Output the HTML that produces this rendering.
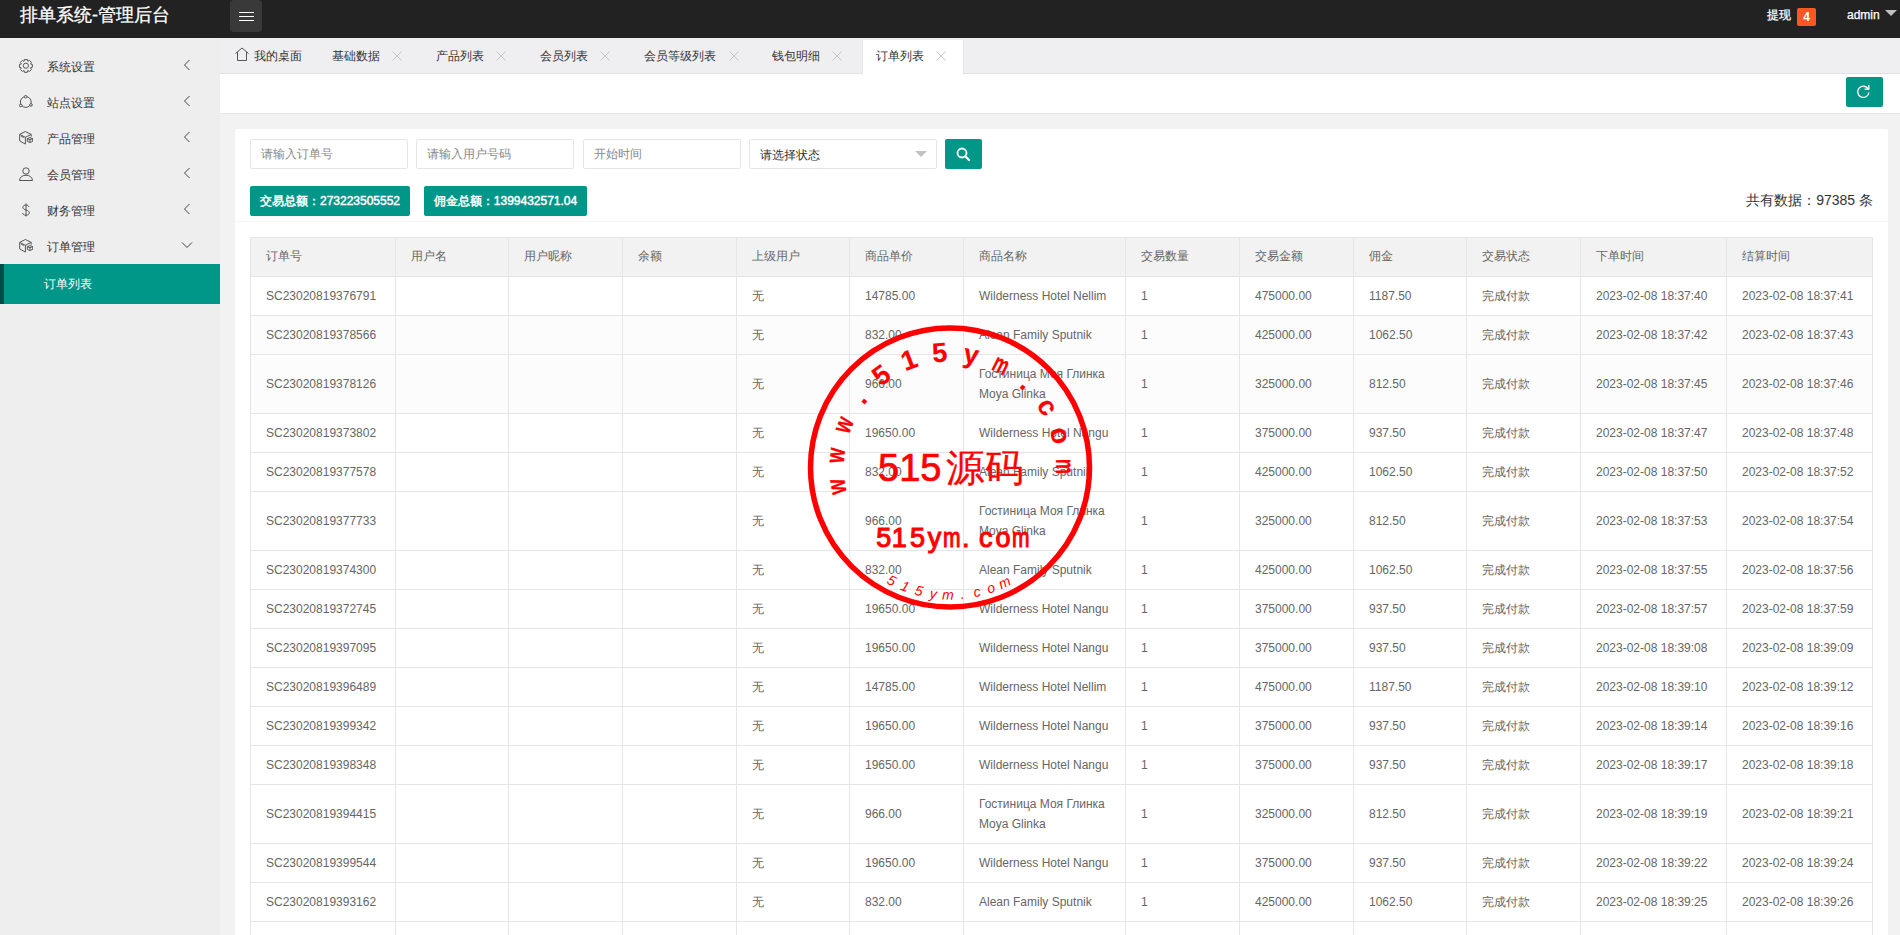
<!DOCTYPE html><html><head><meta charset="utf-8"><title>订单列表</title><style>
*{margin:0;padding:0;box-sizing:border-box}
html,body{width:1900px;height:935px;overflow:hidden;background:#f2f2f2;font-family:"Liberation Sans",sans-serif;font-size:12px;color:#333}
.a{position:absolute}
.hdr{left:0;top:0;width:1900px;height:38px;background:#222}
.side{left:0;top:38px;width:220px;height:897px;background:#eee}
.tabs{left:220px;top:38px;width:1680px;height:36px;background:#efeff1;border-bottom:1px solid #e2e2e2}
.tool{left:220px;top:74px;width:1680px;height:40px;background:#fff;border-bottom:1px solid #e6e6e6}
.card{left:235px;top:129px;width:1653px;height:820px;background:#fff;border-radius:2px}
.t{white-space:nowrap;line-height:20px}
</style></head><body>
<div class="a hdr"></div>
<div class="a t" style="left:20px;top:4.5px;font-size:18px;line-height:20px;color:#fff;-webkit-text-stroke:0.3px #fff">排单系统-管理后台</div>
<div class="a" style="left:230px;top:0;width:32px;height:32px;background:#393939;border-radius:4px"></div>
<div class="a" style="left:239px;top:11.5px;width:15px;height:1.2px;background:#fff"></div>
<div class="a" style="left:239px;top:15.5px;width:15px;height:1.2px;background:#fff"></div>
<div class="a" style="left:239px;top:19.5px;width:15px;height:1.2px;background:#fff"></div>
<div class="a t" style="left:1767px;top:5px;color:#fff;-webkit-text-stroke:0.25px #fff">提现</div>
<div class="a" style="left:1797px;top:8px;width:19px;height:18px;background:#ff5722;border-radius:2px;color:#fff;font-weight:bold;text-align:center;line-height:18px">4</div>
<div class="a t" style="left:1847px;top:5px;color:#fff;-webkit-text-stroke:0.25px #fff">admin</div>
<svg class="a" style="left:1885px;top:10px" width="12" height="7"><path d="M0 0H12L6 6Z" fill="#c2c2c2"/></svg>
<div class="a side"></div>
<div class="a" style="left:19px;top:59px;width:14px;height:14px"><svg width="14" height="14" viewBox="0 0 14 14" fill="none" stroke="#555" stroke-width="1"><path d="M5.05 2.26 L5.46 0.46 L8.34 0.46 L8.75 2.26 L8.87 2.31 L10.44 1.33 L12.47 3.36 L11.49 4.93 L11.54 5.05 L13.34 5.46 L13.34 8.34 L11.54 8.75 L11.49 8.87 L12.47 10.44 L10.44 12.47 L8.87 11.49 L8.75 11.54 L8.34 13.34 L5.46 13.34 L5.05 11.54 L4.93 11.49 L3.36 12.47 L1.33 10.44 L2.31 8.87 L2.26 8.75 L0.46 8.34 L0.46 5.46 L2.26 5.05 L2.31 4.93 L1.33 3.36 L3.36 1.33 L4.93 2.31Z" stroke-linejoin="round"/><circle cx="6.9" cy="6.7" r="2.6"/></svg></div>
<div class="a t" style="left:47px;top:57px;color:#333">系统设置</div>
<svg class="a" style="left:183px;top:59px" width="8" height="12"><path d="M6.5 1L1.5 6 6.5 11" fill="none" stroke="#444" stroke-width="1"/></svg>
<div class="a" style="left:19px;top:95px;width:14px;height:14px"><svg width="14" height="14" viewBox="0 0 14 14" fill="none" stroke="#555" stroke-width="1"><circle cx="6.8" cy="7" r="5.4"/><circle cx="6.6" cy="1.7" r="1.3" fill="#eee"/><circle cx="1.7" cy="10.5" r="1.3" fill="#eee"/><circle cx="12" cy="9.9" r="1.3" fill="#eee"/></svg></div>
<div class="a t" style="left:47px;top:93px;color:#333">站点设置</div>
<svg class="a" style="left:183px;top:95px" width="8" height="12"><path d="M6.5 1L1.5 6 6.5 11" fill="none" stroke="#444" stroke-width="1"/></svg>
<div class="a" style="left:19px;top:131px;width:14px;height:14px"><svg width="14" height="14" viewBox="0 0 14 14" fill="none" stroke="#555" stroke-width="1" stroke-linejoin="round"><path d="M0.7 3.4L6.4 0.5 12.2 3.4 6.4 6.3Z M0.7 3.4V9.9L6.4 13.1V6.3 M12.2 3.4V5.6 M2.2 5.2L4.8 6.5"/><path d="M8.3 7.6L11 6.6 13.7 7.6 11 8.7Z M8.3 7.6V10.4L11 11.5 13.7 10.4V7.6 M11 8.7V11.5"/></svg></div>
<div class="a t" style="left:47px;top:129px;color:#333">产品管理</div>
<svg class="a" style="left:183px;top:131px" width="8" height="12"><path d="M6.5 1L1.5 6 6.5 11" fill="none" stroke="#444" stroke-width="1"/></svg>
<div class="a" style="left:19px;top:167px;width:14px;height:14px"><svg width="14" height="14" viewBox="0 0 14 14" fill="none" stroke="#555" stroke-width="1"><circle cx="7" cy="4" r="3.2"/><path d="M0.5 13.5C0.8 10 3.5 8.2 7 8.2S13.2 10 13.5 13.5Z"/></svg></div>
<div class="a t" style="left:47px;top:165px;color:#333">会员管理</div>
<svg class="a" style="left:183px;top:167px" width="8" height="12"><path d="M6.5 1L1.5 6 6.5 11" fill="none" stroke="#444" stroke-width="1"/></svg>
<div class="a" style="left:19px;top:203px;width:14px;height:14px"><svg width="14" height="14" viewBox="0 0 14 14" fill="none" stroke="#555" stroke-width="1"><path d="M10 4C9.6 2.6 8.5 2 7 2 5 2 3.9 3 3.9 4.3 3.9 7.6 10.3 6.4 10.3 9.8 10.3 11.2 9 12.2 7 12.2 5.2 12.2 4 11.4 3.6 10M7 0.5v13"/></svg></div>
<div class="a t" style="left:47px;top:201px;color:#333">财务管理</div>
<svg class="a" style="left:183px;top:203px" width="8" height="12"><path d="M6.5 1L1.5 6 6.5 11" fill="none" stroke="#444" stroke-width="1"/></svg>
<div class="a" style="left:19px;top:239px;width:14px;height:14px"><svg width="14" height="14" viewBox="0 0 14 14" fill="none" stroke="#555" stroke-width="1" stroke-linejoin="round"><path d="M0.7 3.4L6.4 0.5 12.2 3.4 6.4 6.3Z M0.7 3.4V9.9L6.4 13.1V6.3 M12.2 3.4V5.6 M2.2 5.2L4.8 6.5"/><path d="M8.3 7.6L11 6.6 13.7 7.6 11 8.7Z M8.3 7.6V10.4L11 11.5 13.7 10.4V7.6 M11 8.7V11.5"/></svg></div>
<div class="a t" style="left:47px;top:237px;color:#333">订单管理</div>
<svg class="a" style="left:181px;top:241px" width="12" height="8"><path d="M1 1.5L6 6.5 11 1.5" fill="none" stroke="#444" stroke-width="1"/></svg>
<div class="a" style="left:0;top:264px;width:220px;height:40px;background:#009688;border-left:4px solid #004d47"></div>
<div class="a t" style="left:44px;top:274px;color:#fff">订单列表</div>
<div class="a tabs"></div>
<div class="a tool"></div>
<div class="a" style="left:862px;top:39px;width:102px;height:36px;background:#fff;border-left:1px solid #e6e6e6;border-right:1px solid #e6e6e6;border-top:1px solid #eee"></div>
<svg class="a" style="left:234px;top:47px" width="16" height="15" viewBox="0 0 16 15"><path d="M1.5 6.5L8 1 14.5 6.5M3.5 5v8.5h9V5" fill="none" stroke="#555" stroke-width="1"/></svg>
<div class="a t" style="left:254px;top:46px;color:#333">我的桌面</div>
<div class="a t" style="left:332px;top:46px;color:#333">基础数据</div>
<svg class="a" style="left:392px;top:51px" width="10" height="10"><path d="M0.5 0.5L9.5 9.5M9.5 0.5L0.5 9.5" stroke="#c4c4c4" stroke-width="1"/></svg>
<div class="a t" style="left:436px;top:46px;color:#333">产品列表</div>
<svg class="a" style="left:496px;top:51px" width="10" height="10"><path d="M0.5 0.5L9.5 9.5M9.5 0.5L0.5 9.5" stroke="#c4c4c4" stroke-width="1"/></svg>
<div class="a t" style="left:540px;top:46px;color:#333">会员列表</div>
<svg class="a" style="left:600px;top:51px" width="10" height="10"><path d="M0.5 0.5L9.5 9.5M9.5 0.5L0.5 9.5" stroke="#c4c4c4" stroke-width="1"/></svg>
<div class="a t" style="left:644px;top:46px;color:#333">会员等级列表</div>
<svg class="a" style="left:729px;top:51px" width="10" height="10"><path d="M0.5 0.5L9.5 9.5M9.5 0.5L0.5 9.5" stroke="#c4c4c4" stroke-width="1"/></svg>
<div class="a t" style="left:772px;top:46px;color:#333">钱包明细</div>
<svg class="a" style="left:832px;top:51px" width="10" height="10"><path d="M0.5 0.5L9.5 9.5M9.5 0.5L0.5 9.5" stroke="#c4c4c4" stroke-width="1"/></svg>
<div class="a t" style="left:876px;top:46px;color:#333">订单列表</div>
<svg class="a" style="left:936px;top:51px" width="10" height="10"><path d="M0.5 0.5L9.5 9.5M9.5 0.5L0.5 9.5" stroke="#c4c4c4" stroke-width="1"/></svg>
<div class="a" style="left:1846px;top:77px;width:37px;height:30px;background:#009688;border-radius:2px"></div>
<svg class="a" style="left:1856px;top:84px" width="15" height="15" viewBox="0 0 15 15"><path d="M12.3 5.2A5.6 5.6 0 1 0 12.9 8.5" fill="none" stroke="#fff" stroke-width="1.3"/><path d="M8.6 5.2h4.2V1" fill="none" stroke="#fff" stroke-width="1.3"/></svg>
<div class="a card"></div>
<div class="a" style="left:250px;top:139px;width:158px;height:30px;border:1px solid #e6e6e6;border-radius:2px;background:#fff"></div>
<div class="a t" style="left:261px;top:144px;color:#888">请输入订单号</div>
<div class="a" style="left:416px;top:139px;width:158px;height:30px;border:1px solid #e6e6e6;border-radius:2px;background:#fff"></div>
<div class="a t" style="left:427px;top:144px;color:#888">请输入用户号码</div>
<div class="a" style="left:583px;top:139px;width:158px;height:30px;border:1px solid #e6e6e6;border-radius:2px;background:#fff"></div>
<div class="a t" style="left:594px;top:144px;color:#888">开始时间</div>
<div class="a" style="left:749px;top:139px;width:188px;height:30px;border:1px solid #e6e6e6;border-radius:2px;background:#fff"></div>
<div class="a t" style="left:760px;top:145px;color:#333">请选择状态</div>
<svg class="a" style="left:915px;top:151px" width="12" height="6"><path d="M0 0H12L6 6Z" fill="#c2c2c2"/></svg>
<div class="a" style="left:945px;top:139px;width:37px;height:30px;background:#009688;border-radius:2px"></div>
<svg class="a" style="left:956px;top:147px" width="15" height="15" viewBox="0 0 15 15"><circle cx="6" cy="6" r="4.5" fill="none" stroke="#fff" stroke-width="1.8"/><path d="M9.3 9.3L13 13" stroke="#fff" stroke-width="2.2" stroke-linecap="round"/></svg>
<div class="a t" style="left:250px;top:186px;width:160px;height:30px;background:#009688;border-radius:2px;color:#fff;-webkit-text-stroke:0.45px #fff;line-height:30px;text-align:center">交易总额：273223505552</div>
<div class="a t" style="left:424px;top:186px;width:163px;height:30px;background:#009688;border-radius:2px;color:#fff;-webkit-text-stroke:0.45px #fff;line-height:30px;text-align:center">佣金总额：1399432571.04</div>
<div class="a t" style="left:1673px;top:190px;width:200px;text-align:right;font-size:14px;color:#333">共有数据：97385 条</div>
<div class="a" style="left:235px;top:221px;width:1653px;height:1px;background:#f6f6f6"></div>
<div class="a" style="left:250px;top:237px;width:1623px;height:700px;background:#fff"></div>
<div class="a" style="left:250px;top:237px;width:1623px;height:39px;background:#f2f2f2"></div>
<div class="a" style="left:250px;top:316px;width:1623px;height:97px;background:#fcfcfc"></div>
<div class="a" style="left:250px;top:237px;width:1623px;height:1px;background:#e6e6e6"></div>
<div class="a" style="left:250px;top:276px;width:1623px;height:1px;background:#e6e6e6"></div>
<div class="a" style="left:250px;top:315px;width:1623px;height:1px;background:#e6e6e6"></div>
<div class="a" style="left:250px;top:354px;width:1623px;height:1px;background:#e6e6e6"></div>
<div class="a" style="left:250px;top:413px;width:1623px;height:1px;background:#e6e6e6"></div>
<div class="a" style="left:250px;top:452px;width:1623px;height:1px;background:#e6e6e6"></div>
<div class="a" style="left:250px;top:491px;width:1623px;height:1px;background:#e6e6e6"></div>
<div class="a" style="left:250px;top:550px;width:1623px;height:1px;background:#e6e6e6"></div>
<div class="a" style="left:250px;top:589px;width:1623px;height:1px;background:#e6e6e6"></div>
<div class="a" style="left:250px;top:628px;width:1623px;height:1px;background:#e6e6e6"></div>
<div class="a" style="left:250px;top:667px;width:1623px;height:1px;background:#e6e6e6"></div>
<div class="a" style="left:250px;top:706px;width:1623px;height:1px;background:#e6e6e6"></div>
<div class="a" style="left:250px;top:745px;width:1623px;height:1px;background:#e6e6e6"></div>
<div class="a" style="left:250px;top:784px;width:1623px;height:1px;background:#e6e6e6"></div>
<div class="a" style="left:250px;top:843px;width:1623px;height:1px;background:#e6e6e6"></div>
<div class="a" style="left:250px;top:882px;width:1623px;height:1px;background:#e6e6e6"></div>
<div class="a" style="left:250px;top:921px;width:1623px;height:1px;background:#e6e6e6"></div>
<div class="a" style="left:250px;top:980px;width:1623px;height:1px;background:#e6e6e6"></div>
<div class="a" style="left:250px;top:237px;width:1px;height:700px;background:#e6e6e6"></div>
<div class="a" style="left:395px;top:237px;width:1px;height:700px;background:#e6e6e6"></div>
<div class="a" style="left:508px;top:237px;width:1px;height:700px;background:#e6e6e6"></div>
<div class="a" style="left:622px;top:237px;width:1px;height:700px;background:#e6e6e6"></div>
<div class="a" style="left:736px;top:237px;width:1px;height:700px;background:#e6e6e6"></div>
<div class="a" style="left:849px;top:237px;width:1px;height:700px;background:#e6e6e6"></div>
<div class="a" style="left:963px;top:237px;width:1px;height:700px;background:#e6e6e6"></div>
<div class="a" style="left:1125px;top:237px;width:1px;height:700px;background:#e6e6e6"></div>
<div class="a" style="left:1239px;top:237px;width:1px;height:700px;background:#e6e6e6"></div>
<div class="a" style="left:1353px;top:237px;width:1px;height:700px;background:#e6e6e6"></div>
<div class="a" style="left:1466px;top:237px;width:1px;height:700px;background:#e6e6e6"></div>
<div class="a" style="left:1580px;top:237px;width:1px;height:700px;background:#e6e6e6"></div>
<div class="a" style="left:1726px;top:237px;width:1px;height:700px;background:#e6e6e6"></div>
<div class="a" style="left:1872px;top:237px;width:1px;height:700px;background:#e6e6e6"></div>
<div class="a t" style="left:266px;top:246px;color:#666">订单号</div>
<div class="a t" style="left:411px;top:246px;color:#666">用户名</div>
<div class="a t" style="left:524px;top:246px;color:#666">用户昵称</div>
<div class="a t" style="left:638px;top:246px;color:#666">余额</div>
<div class="a t" style="left:752px;top:246px;color:#666">上级用户</div>
<div class="a t" style="left:865px;top:246px;color:#666">商品单价</div>
<div class="a t" style="left:979px;top:246px;color:#666">商品名称</div>
<div class="a t" style="left:1141px;top:246px;color:#666">交易数量</div>
<div class="a t" style="left:1255px;top:246px;color:#666">交易金额</div>
<div class="a t" style="left:1369px;top:246px;color:#666">佣金</div>
<div class="a t" style="left:1482px;top:246px;color:#666">交易状态</div>
<div class="a t" style="left:1596px;top:246px;color:#666">下单时间</div>
<div class="a t" style="left:1742px;top:246px;color:#666">结算时间</div>
<div class="a t" style="left:266px;top:286.0px;color:#666">SC23020819376791</div>
<div class="a t" style="left:752px;top:286.0px;color:#666">无</div>
<div class="a t" style="left:865px;top:286.0px;color:#666">14785.00</div>
<div class="a t" style="left:1141px;top:286.0px;color:#666">1</div>
<div class="a t" style="left:1255px;top:286.0px;color:#666">475000.00</div>
<div class="a t" style="left:1369px;top:286.0px;color:#666">1187.50</div>
<div class="a t" style="left:1482px;top:286.0px;color:#666">完成付款</div>
<div class="a t" style="left:1596px;top:286.0px;color:#666">2023-02-08 18:37:40</div>
<div class="a t" style="left:1742px;top:286.0px;color:#666">2023-02-08 18:37:41</div>
<div class="a t" style="left:979px;top:286.0px;color:#666">Wilderness Hotel Nellim</div>
<div class="a t" style="left:266px;top:325.0px;color:#666">SC23020819378566</div>
<div class="a t" style="left:752px;top:325.0px;color:#666">无</div>
<div class="a t" style="left:865px;top:325.0px;color:#666">832.00</div>
<div class="a t" style="left:1141px;top:325.0px;color:#666">1</div>
<div class="a t" style="left:1255px;top:325.0px;color:#666">425000.00</div>
<div class="a t" style="left:1369px;top:325.0px;color:#666">1062.50</div>
<div class="a t" style="left:1482px;top:325.0px;color:#666">完成付款</div>
<div class="a t" style="left:1596px;top:325.0px;color:#666">2023-02-08 18:37:42</div>
<div class="a t" style="left:1742px;top:325.0px;color:#666">2023-02-08 18:37:43</div>
<div class="a t" style="left:979px;top:325.0px;color:#666">Alean Family Sputnik</div>
<div class="a t" style="left:266px;top:374.0px;color:#666">SC23020819378126</div>
<div class="a t" style="left:752px;top:374.0px;color:#666">无</div>
<div class="a t" style="left:865px;top:374.0px;color:#666">966.00</div>
<div class="a t" style="left:1141px;top:374.0px;color:#666">1</div>
<div class="a t" style="left:1255px;top:374.0px;color:#666">325000.00</div>
<div class="a t" style="left:1369px;top:374.0px;color:#666">812.50</div>
<div class="a t" style="left:1482px;top:374.0px;color:#666">完成付款</div>
<div class="a t" style="left:1596px;top:374.0px;color:#666">2023-02-08 18:37:45</div>
<div class="a t" style="left:1742px;top:374.0px;color:#666">2023-02-08 18:37:46</div>
<div class="a t" style="left:979px;top:364.0px;color:#666">Гостиница Моя Глинка<br>Moya Glinka</div>
<div class="a t" style="left:266px;top:423.0px;color:#666">SC23020819373802</div>
<div class="a t" style="left:752px;top:423.0px;color:#666">无</div>
<div class="a t" style="left:865px;top:423.0px;color:#666">19650.00</div>
<div class="a t" style="left:1141px;top:423.0px;color:#666">1</div>
<div class="a t" style="left:1255px;top:423.0px;color:#666">375000.00</div>
<div class="a t" style="left:1369px;top:423.0px;color:#666">937.50</div>
<div class="a t" style="left:1482px;top:423.0px;color:#666">完成付款</div>
<div class="a t" style="left:1596px;top:423.0px;color:#666">2023-02-08 18:37:47</div>
<div class="a t" style="left:1742px;top:423.0px;color:#666">2023-02-08 18:37:48</div>
<div class="a t" style="left:979px;top:423.0px;color:#666">Wilderness Hotel Nangu</div>
<div class="a t" style="left:266px;top:462.0px;color:#666">SC23020819377578</div>
<div class="a t" style="left:752px;top:462.0px;color:#666">无</div>
<div class="a t" style="left:865px;top:462.0px;color:#666">832.00</div>
<div class="a t" style="left:1141px;top:462.0px;color:#666">1</div>
<div class="a t" style="left:1255px;top:462.0px;color:#666">425000.00</div>
<div class="a t" style="left:1369px;top:462.0px;color:#666">1062.50</div>
<div class="a t" style="left:1482px;top:462.0px;color:#666">完成付款</div>
<div class="a t" style="left:1596px;top:462.0px;color:#666">2023-02-08 18:37:50</div>
<div class="a t" style="left:1742px;top:462.0px;color:#666">2023-02-08 18:37:52</div>
<div class="a t" style="left:979px;top:462.0px;color:#666">Alean Family Sputnik</div>
<div class="a t" style="left:266px;top:511.0px;color:#666">SC23020819377733</div>
<div class="a t" style="left:752px;top:511.0px;color:#666">无</div>
<div class="a t" style="left:865px;top:511.0px;color:#666">966.00</div>
<div class="a t" style="left:1141px;top:511.0px;color:#666">1</div>
<div class="a t" style="left:1255px;top:511.0px;color:#666">325000.00</div>
<div class="a t" style="left:1369px;top:511.0px;color:#666">812.50</div>
<div class="a t" style="left:1482px;top:511.0px;color:#666">完成付款</div>
<div class="a t" style="left:1596px;top:511.0px;color:#666">2023-02-08 18:37:53</div>
<div class="a t" style="left:1742px;top:511.0px;color:#666">2023-02-08 18:37:54</div>
<div class="a t" style="left:979px;top:501.0px;color:#666">Гостиница Моя Глинка<br>Moya Glinka</div>
<div class="a t" style="left:266px;top:560.0px;color:#666">SC23020819374300</div>
<div class="a t" style="left:752px;top:560.0px;color:#666">无</div>
<div class="a t" style="left:865px;top:560.0px;color:#666">832.00</div>
<div class="a t" style="left:1141px;top:560.0px;color:#666">1</div>
<div class="a t" style="left:1255px;top:560.0px;color:#666">425000.00</div>
<div class="a t" style="left:1369px;top:560.0px;color:#666">1062.50</div>
<div class="a t" style="left:1482px;top:560.0px;color:#666">完成付款</div>
<div class="a t" style="left:1596px;top:560.0px;color:#666">2023-02-08 18:37:55</div>
<div class="a t" style="left:1742px;top:560.0px;color:#666">2023-02-08 18:37:56</div>
<div class="a t" style="left:979px;top:560.0px;color:#666">Alean Family Sputnik</div>
<div class="a t" style="left:266px;top:599.0px;color:#666">SC23020819372745</div>
<div class="a t" style="left:752px;top:599.0px;color:#666">无</div>
<div class="a t" style="left:865px;top:599.0px;color:#666">19650.00</div>
<div class="a t" style="left:1141px;top:599.0px;color:#666">1</div>
<div class="a t" style="left:1255px;top:599.0px;color:#666">375000.00</div>
<div class="a t" style="left:1369px;top:599.0px;color:#666">937.50</div>
<div class="a t" style="left:1482px;top:599.0px;color:#666">完成付款</div>
<div class="a t" style="left:1596px;top:599.0px;color:#666">2023-02-08 18:37:57</div>
<div class="a t" style="left:1742px;top:599.0px;color:#666">2023-02-08 18:37:59</div>
<div class="a t" style="left:979px;top:599.0px;color:#666">Wilderness Hotel Nangu</div>
<div class="a t" style="left:266px;top:638.0px;color:#666">SC23020819397095</div>
<div class="a t" style="left:752px;top:638.0px;color:#666">无</div>
<div class="a t" style="left:865px;top:638.0px;color:#666">19650.00</div>
<div class="a t" style="left:1141px;top:638.0px;color:#666">1</div>
<div class="a t" style="left:1255px;top:638.0px;color:#666">375000.00</div>
<div class="a t" style="left:1369px;top:638.0px;color:#666">937.50</div>
<div class="a t" style="left:1482px;top:638.0px;color:#666">完成付款</div>
<div class="a t" style="left:1596px;top:638.0px;color:#666">2023-02-08 18:39:08</div>
<div class="a t" style="left:1742px;top:638.0px;color:#666">2023-02-08 18:39:09</div>
<div class="a t" style="left:979px;top:638.0px;color:#666">Wilderness Hotel Nangu</div>
<div class="a t" style="left:266px;top:677.0px;color:#666">SC23020819396489</div>
<div class="a t" style="left:752px;top:677.0px;color:#666">无</div>
<div class="a t" style="left:865px;top:677.0px;color:#666">14785.00</div>
<div class="a t" style="left:1141px;top:677.0px;color:#666">1</div>
<div class="a t" style="left:1255px;top:677.0px;color:#666">475000.00</div>
<div class="a t" style="left:1369px;top:677.0px;color:#666">1187.50</div>
<div class="a t" style="left:1482px;top:677.0px;color:#666">完成付款</div>
<div class="a t" style="left:1596px;top:677.0px;color:#666">2023-02-08 18:39:10</div>
<div class="a t" style="left:1742px;top:677.0px;color:#666">2023-02-08 18:39:12</div>
<div class="a t" style="left:979px;top:677.0px;color:#666">Wilderness Hotel Nellim</div>
<div class="a t" style="left:266px;top:716.0px;color:#666">SC23020819399342</div>
<div class="a t" style="left:752px;top:716.0px;color:#666">无</div>
<div class="a t" style="left:865px;top:716.0px;color:#666">19650.00</div>
<div class="a t" style="left:1141px;top:716.0px;color:#666">1</div>
<div class="a t" style="left:1255px;top:716.0px;color:#666">375000.00</div>
<div class="a t" style="left:1369px;top:716.0px;color:#666">937.50</div>
<div class="a t" style="left:1482px;top:716.0px;color:#666">完成付款</div>
<div class="a t" style="left:1596px;top:716.0px;color:#666">2023-02-08 18:39:14</div>
<div class="a t" style="left:1742px;top:716.0px;color:#666">2023-02-08 18:39:16</div>
<div class="a t" style="left:979px;top:716.0px;color:#666">Wilderness Hotel Nangu</div>
<div class="a t" style="left:266px;top:755.0px;color:#666">SC23020819398348</div>
<div class="a t" style="left:752px;top:755.0px;color:#666">无</div>
<div class="a t" style="left:865px;top:755.0px;color:#666">19650.00</div>
<div class="a t" style="left:1141px;top:755.0px;color:#666">1</div>
<div class="a t" style="left:1255px;top:755.0px;color:#666">375000.00</div>
<div class="a t" style="left:1369px;top:755.0px;color:#666">937.50</div>
<div class="a t" style="left:1482px;top:755.0px;color:#666">完成付款</div>
<div class="a t" style="left:1596px;top:755.0px;color:#666">2023-02-08 18:39:17</div>
<div class="a t" style="left:1742px;top:755.0px;color:#666">2023-02-08 18:39:18</div>
<div class="a t" style="left:979px;top:755.0px;color:#666">Wilderness Hotel Nangu</div>
<div class="a t" style="left:266px;top:804.0px;color:#666">SC23020819394415</div>
<div class="a t" style="left:752px;top:804.0px;color:#666">无</div>
<div class="a t" style="left:865px;top:804.0px;color:#666">966.00</div>
<div class="a t" style="left:1141px;top:804.0px;color:#666">1</div>
<div class="a t" style="left:1255px;top:804.0px;color:#666">325000.00</div>
<div class="a t" style="left:1369px;top:804.0px;color:#666">812.50</div>
<div class="a t" style="left:1482px;top:804.0px;color:#666">完成付款</div>
<div class="a t" style="left:1596px;top:804.0px;color:#666">2023-02-08 18:39:19</div>
<div class="a t" style="left:1742px;top:804.0px;color:#666">2023-02-08 18:39:21</div>
<div class="a t" style="left:979px;top:794.0px;color:#666">Гостиница Моя Глинка<br>Moya Glinka</div>
<div class="a t" style="left:266px;top:853.0px;color:#666">SC23020819399544</div>
<div class="a t" style="left:752px;top:853.0px;color:#666">无</div>
<div class="a t" style="left:865px;top:853.0px;color:#666">19650.00</div>
<div class="a t" style="left:1141px;top:853.0px;color:#666">1</div>
<div class="a t" style="left:1255px;top:853.0px;color:#666">375000.00</div>
<div class="a t" style="left:1369px;top:853.0px;color:#666">937.50</div>
<div class="a t" style="left:1482px;top:853.0px;color:#666">完成付款</div>
<div class="a t" style="left:1596px;top:853.0px;color:#666">2023-02-08 18:39:22</div>
<div class="a t" style="left:1742px;top:853.0px;color:#666">2023-02-08 18:39:24</div>
<div class="a t" style="left:979px;top:853.0px;color:#666">Wilderness Hotel Nangu</div>
<div class="a t" style="left:266px;top:892.0px;color:#666">SC23020819393162</div>
<div class="a t" style="left:752px;top:892.0px;color:#666">无</div>
<div class="a t" style="left:865px;top:892.0px;color:#666">832.00</div>
<div class="a t" style="left:1141px;top:892.0px;color:#666">1</div>
<div class="a t" style="left:1255px;top:892.0px;color:#666">425000.00</div>
<div class="a t" style="left:1369px;top:892.0px;color:#666">1062.50</div>
<div class="a t" style="left:1482px;top:892.0px;color:#666">完成付款</div>
<div class="a t" style="left:1596px;top:892.0px;color:#666">2023-02-08 18:39:25</div>
<div class="a t" style="left:1742px;top:892.0px;color:#666">2023-02-08 18:39:26</div>
<div class="a t" style="left:979px;top:892.0px;color:#666">Alean Family Sputnik</div>
<svg class="a" style="left:0;top:0" width="1900" height="935"><circle cx="950" cy="467.5" r="139.5" fill="none" stroke="#f00" stroke-width="5.5"/><text x="950" y="361.5" transform="rotate(-99.70 950 467.5)" text-anchor="middle" font-family="Liberation Sans" font-weight="bold" font-size="27" stroke="#f00" stroke-width="0.2" fill="#f00" textLength="15" lengthAdjust="spacingAndGlyphs">w</text><text x="950" y="361.5" transform="rotate(-83.93 950 467.5)" text-anchor="middle" font-family="Liberation Sans" font-weight="bold" font-size="27" stroke="#f00" stroke-width="0.2" fill="#f00" textLength="15" lengthAdjust="spacingAndGlyphs">w</text><text x="950" y="361.5" transform="rotate(-68.17 950 467.5)" text-anchor="middle" font-family="Liberation Sans" font-weight="bold" font-size="27" stroke="#f00" stroke-width="0.2" fill="#f00" textLength="15" lengthAdjust="spacingAndGlyphs">w</text><text x="950" y="361.5" transform="rotate(-52.40 950 467.5)" text-anchor="middle" font-family="Liberation Sans" font-weight="bold" font-size="27" stroke="#f00" stroke-width="0.2" fill="#f00">.</text><text x="950" y="361.5" transform="rotate(-36.63 950 467.5)" text-anchor="middle" font-family="Liberation Sans" font-weight="bold" font-size="27" stroke="#f00" stroke-width="0.2" fill="#f00">5</text><text x="950" y="361.5" transform="rotate(-20.87 950 467.5)" text-anchor="middle" font-family="Liberation Sans" font-weight="bold" font-size="27" stroke="#f00" stroke-width="0.2" fill="#f00">1</text><text x="950" y="361.5" transform="rotate(-5.10 950 467.5)" text-anchor="middle" font-family="Liberation Sans" font-weight="bold" font-size="27" stroke="#f00" stroke-width="0.2" fill="#f00">5</text><text x="950" y="361.5" transform="rotate(10.67 950 467.5)" text-anchor="middle" font-family="Liberation Sans" font-weight="bold" font-size="27" stroke="#f00" stroke-width="0.2" fill="#f00">y</text><text x="950" y="361.5" transform="rotate(26.43 950 467.5)" text-anchor="middle" font-family="Liberation Sans" font-weight="bold" font-size="27" stroke="#f00" stroke-width="0.2" fill="#f00" textLength="15" lengthAdjust="spacingAndGlyphs">m</text><text x="950" y="361.5" transform="rotate(42.20 950 467.5)" text-anchor="middle" font-family="Liberation Sans" font-weight="bold" font-size="27" stroke="#f00" stroke-width="0.2" fill="#f00">.</text><text x="950" y="361.5" transform="rotate(57.97 950 467.5)" text-anchor="middle" font-family="Liberation Sans" font-weight="bold" font-size="27" stroke="#f00" stroke-width="0.2" fill="#f00">c</text><text x="950" y="361.5" transform="rotate(73.73 950 467.5)" text-anchor="middle" font-family="Liberation Sans" font-weight="bold" font-size="27" stroke="#f00" stroke-width="0.2" fill="#f00">o</text><text x="950" y="361.5" transform="rotate(89.50 950 467.5)" text-anchor="middle" font-family="Liberation Sans" font-weight="bold" font-size="27" stroke="#f00" stroke-width="0.2" fill="#f00" textLength="15" lengthAdjust="spacingAndGlyphs">m</text><text x="950" y="599.5" transform="rotate(27.30 950 467.5)" text-anchor="middle" font-family="Liberation Sans" font-style="italic" font-size="14" fill="#f00">5</text><text x="950" y="599.5" transform="rotate(20.71 950 467.5)" text-anchor="middle" font-family="Liberation Sans" font-style="italic" font-size="14" fill="#f00">1</text><text x="950" y="599.5" transform="rotate(14.12 950 467.5)" text-anchor="middle" font-family="Liberation Sans" font-style="italic" font-size="14" fill="#f00">5</text><text x="950" y="599.5" transform="rotate(7.54 950 467.5)" text-anchor="middle" font-family="Liberation Sans" font-style="italic" font-size="14" fill="#f00">y</text><text x="950" y="599.5" transform="rotate(0.95 950 467.5)" text-anchor="middle" font-family="Liberation Sans" font-style="italic" font-size="14" fill="#f00">m</text><text x="950" y="599.5" transform="rotate(-5.64 950 467.5)" text-anchor="middle" font-family="Liberation Sans" font-style="italic" font-size="14" fill="#f00">.</text><text x="950" y="599.5" transform="rotate(-12.23 950 467.5)" text-anchor="middle" font-family="Liberation Sans" font-style="italic" font-size="14" fill="#f00">c</text><text x="950" y="599.5" transform="rotate(-18.81 950 467.5)" text-anchor="middle" font-family="Liberation Sans" font-style="italic" font-size="14" fill="#f00">o</text><text x="950" y="599.5" transform="rotate(-25.40 950 467.5)" text-anchor="middle" font-family="Liberation Sans" font-style="italic" font-size="14" fill="#f00">m</text><text x="878" y="481" font-family="Liberation Sans" font-size="38" fill="#f00" stroke="#f00" stroke-width="0.7">515</text><text x="946" y="481" font-family="Liberation Sans" font-size="38" fill="#f00" stroke="#f00" stroke-width="0.3" textLength="77" lengthAdjust="spacingAndGlyphs">源码</text><text x="883.7" y="546.8" text-anchor="middle" font-family="Liberation Sans" font-size="27" fill="#f00" stroke="#f00" stroke-width="1.1">5</text><text x="899.2" y="546.8" text-anchor="middle" font-family="Liberation Sans" font-size="27" fill="#f00" stroke="#f00" stroke-width="1.1">1</text><text x="917.5" y="546.8" text-anchor="middle" font-family="Liberation Sans" font-size="27" fill="#f00" stroke="#f00" stroke-width="1.1">5</text><text x="934.5" y="546.8" text-anchor="middle" font-family="Liberation Sans" font-size="27" fill="#f00" stroke="#f00" stroke-width="1.1">y</text><text x="951.8" y="546.8" text-anchor="middle" font-family="Liberation Sans" font-size="27" fill="#f00" stroke="#f00" stroke-width="1.1" textLength="17.5" lengthAdjust="spacingAndGlyphs">m</text><text x="965.7" y="546.8" text-anchor="middle" font-family="Liberation Sans" font-size="27" fill="#f00" stroke="#f00" stroke-width="1.1">.</text><text x="985.7" y="546.8" text-anchor="middle" font-family="Liberation Sans" font-size="27" fill="#f00" stroke="#f00" stroke-width="1.1">c</text><text x="1003" y="546.8" text-anchor="middle" font-family="Liberation Sans" font-size="27" fill="#f00" stroke="#f00" stroke-width="1.1">o</text><text x="1020.7" y="546.8" text-anchor="middle" font-family="Liberation Sans" font-size="27" fill="#f00" stroke="#f00" stroke-width="1.1" textLength="17.5" lengthAdjust="spacingAndGlyphs">m</text></svg>
</body></html>
